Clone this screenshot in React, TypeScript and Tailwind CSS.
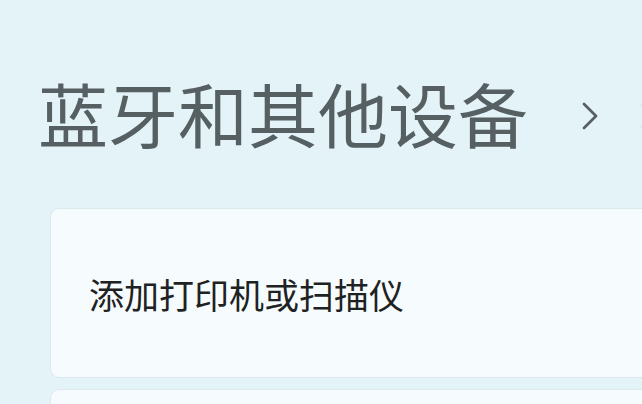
import React from 'react';
import { ChevronRight } from 'lucide-react';

const cjk = { fontFamily: '"Noto Sans CJK SC", "Noto Sans", sans-serif' };

const App: React.FC = () => {
  return (
    <div className="w-[642px] h-[404px] overflow-hidden bg-[#e3f3f8]" style={cjk}>
      <div className="flex items-center pl-[38px] pt-[77px] pb-[3px] h-[72px] box-content whitespace-nowrap">
        <h1 className="shrink-0 text-[70px] leading-[72px] text-[#566062] font-normal">蓝牙和其他设备</h1>
        <ChevronRight className="shrink-0 ml-[38px] mt-[6px] text-[#566062]" size={48} strokeWidth={1.4} />
        <ChevronRight className="shrink-0 ml-[8px] mt-[6px] text-[#dcecf1]" size={48} strokeWidth={1.2} />
      </div>
      <div className="ml-[50px] mt-[56px] flex flex-col gap-[11px]">
        <div className="h-[170px] w-[620px] shrink-0 rounded-[9px] bg-[#f6fbfd] border border-[#dbe9ee] flex items-center pl-[38px] pt-[2px]">
          <span className="text-[35px] text-[#1e2222] whitespace-nowrap">添加打印机或扫描仪</span>
        </div>
        <div className="h-[170px] w-[620px] shrink-0 rounded-[9px] bg-[#f6fbfd] border border-[#dbe9ee]" />
      </div>
    </div>
  );
};

export default App;
